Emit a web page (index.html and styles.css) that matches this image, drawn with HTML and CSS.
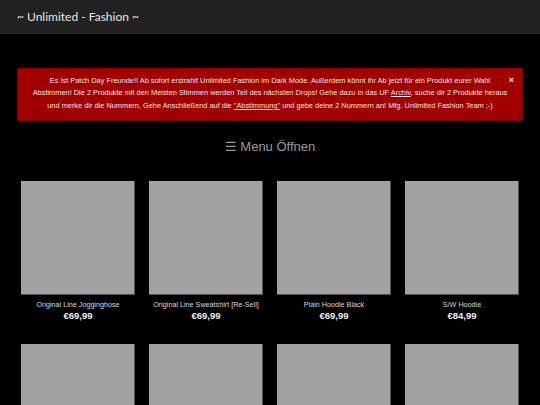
FILE: index.html
```html
<!DOCTYPE html>
<html lang="de">
<head>
<meta charset="utf-8">
<title>Unlimited Fashion</title>
<link rel="stylesheet" href="styles.css">
</head>
<body>
<header class="topbar">
  <span class="brand">~ Unlimited - Fashion ~</span>
</header>
<main class="page">
  <div class="alert">
    <span class="alert-close">×</span>
    <p>Es Ist Patch Day Freunde!! Ab sofort erstrahlt Unlimited Fashion im Dark Mode. Außerdem könnt ihr Ab jetzt für ein Produkt eurer Wahl<br>Abstimmen! Die 2 Produkte mit den Meisten Stimmen werden Teil des nächsten Drops! Gehe dazu in das UF <a href="#">Archiv</a>, suche dir 2 Produkte heraus<br>und merke dir die Nummern, Gehe Anschließend auf die <a href="#">"Abstimmung"</a> und gebe deine 2 Nummern an! Mfg. Unlimited Fashion Team ;-)</p>
  </div>
  <div class="menu-toggle">☰ Menu Öffnen</div>
  <div class="grid">
    <div class="product"><div class="thumb"></div><div class="name">Original Line Jogginghose</div><div class="price">€69,99</div></div>
    <div class="product"><div class="thumb"></div><div class="name">Original Line Sweatshirt [Re-Sell]</div><div class="price">€69,99</div></div>
    <div class="product"><div class="thumb"></div><div class="name">Plain Hoodie Black</div><div class="price">€69,99</div></div>
    <div class="product"><div class="thumb"></div><div class="name">S/W Hoodie</div><div class="price">€84,99</div></div>
    <div class="product"><div class="thumb"></div><div class="name">&nbsp;</div><div class="price">&nbsp;</div></div>
    <div class="product"><div class="thumb"></div><div class="name">&nbsp;</div><div class="price">&nbsp;</div></div>
    <div class="product"><div class="thumb"></div><div class="name">&nbsp;</div><div class="price">&nbsp;</div></div>
    <div class="product"><div class="thumb"></div><div class="name">&nbsp;</div><div class="price">&nbsp;</div></div>
  </div>
</main>
</body>
</html>
```
FILE: styles.css
```css
html, body {
  margin: 0;
  padding: 0;
  background: #000;
}
body {
  font-family: "Liberation Sans", Arial, sans-serif;
  color: #ddd;
}
.topbar {
  height: 34px;
  background: #222;
  border-bottom: 1px solid #2b2b2b;
  display: flex;
  align-items: center;
  padding: 0 17px;
  box-sizing: border-box;
}
.brand {
  font-family: Lato, "Noto Sans", sans-serif;
  font-size: 12px;
  font-weight: 400;
  color: #e6e6e6;
}
.page {
  padding: 34px 17px 0;
}
.alert {
  position: relative;
  background: #a10000;
  border: 1px solid #8a0000;
  border-radius: 2px;
  padding: 6px 4px 8px;
  text-align: center;
  color: #f3e4e4;
  font-size: 7.4px;
  line-height: 12.4px;
  white-space: nowrap;
}
.alert p {
  margin: 0;
}
.alert a {
  color: #f3e4e4;
  text-decoration: underline;
}
.alert-close {
  position: absolute;
  right: 8px;
  top: 5px;
  font-size: 9px;
  font-weight: bold;
  color: #f3e4e4;
}
.menu-toggle {
  text-align: center;
  font-size: 13px;
  color: #9a9a9a;
  margin-top: 18px;
  line-height: 16px;
}
.grid {
  display: grid;
  grid-template-columns: repeat(4, 114px);
  column-gap: 14px;
  row-gap: 22px;
  padding: 0 4px;
  margin-top: 26px;
}
.product {
  text-align: center;
}
.thumb {
  height: 114px;
  background: #a2a2a2;
  border-right: 1px solid #555;
  border-bottom: 1px solid #555;
  box-sizing: border-box;
}
.name {
  margin-top: 5px;
  font-size: 7.2px;
  line-height: 10px;
  color: #d8d8d8;
}
.price {
  font-size: 9.5px;
  font-weight: bold;
  line-height: 12px;
  color: #eee;
}
```
